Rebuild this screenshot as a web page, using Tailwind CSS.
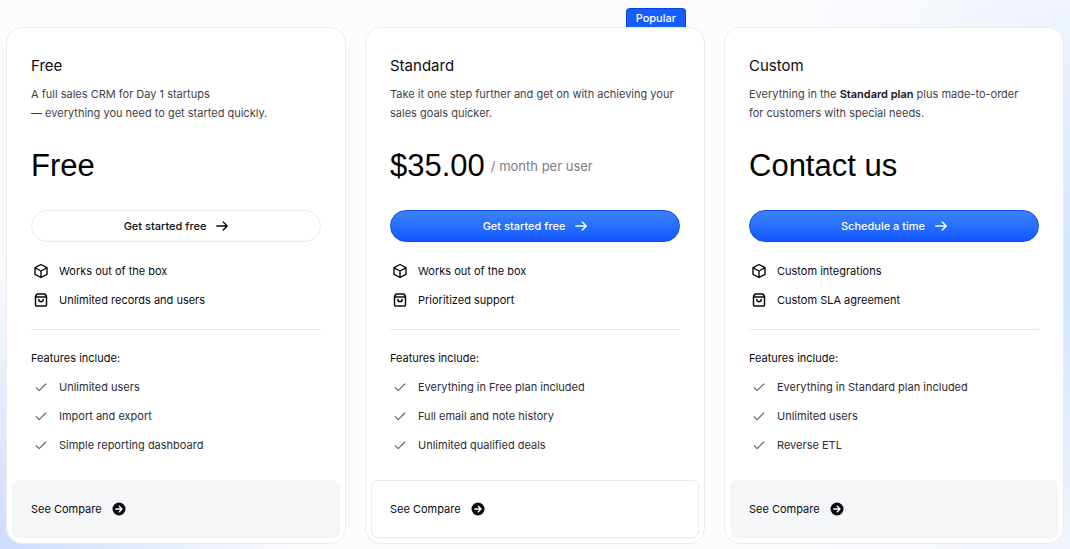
<!DOCTYPE html>
<html lang="en">
<head>
    <meta charset="UTF-8">
    <meta name="viewport" content="width=device-width, initial-scale=1.0">
    <title>Pricing</title>
    <!-- Tailwind CSS CDN -->
    <script src="https://cdn.jsdelivr.net/npm/@tailwindcss/browser@4"></script>
</head>
<body class="min-h-screen bg-[#fcfcfd] bg-[radial-gradient(ellipse_300px_300px_at_0%_100%,#ccdcfd,transparent),radial-gradient(ellipse_260px_300px_at_100%_50%,#cfe6fb,transparent),radial-gradient(ellipse_340px_600px_at_100%_50%,#ecf2fd,transparent)] font-['Inter',sans-serif] text-[11px] text-[#0b0b0f]">
    <!-- Icons shared by the cards -->
    <svg class="hidden" xmlns="http://www.w3.org/2000/svg">
        <symbol id="arrow" viewBox="0 0 12 12" fill="none" stroke="currentColor" stroke-width="1.4" stroke-linecap="round" stroke-linejoin="round">
            <path d="M.8 6h10.4M7.2 2l4 4-4 4"/>
        </symbol>
        <symbol id="box" viewBox="0 0 16 16" fill="none" stroke="currentColor" stroke-width="1.4" stroke-linejoin="round" stroke-linecap="round">
            <path d="M8 1.5l6 3.2v6.6l-6 3.2-6-3.2V4.700zM2.200 4.800L8 8l5.800-3.200M8 8v6.300"/>
        </symbol>
        <symbol id="bag" viewBox="0 0 16 16" fill="none" stroke="currentColor" stroke-width="1.5" stroke-linejoin="round" stroke-linecap="round">
            <path d="M4 2h8l1.500 2.500V13a1 1 0 0 1-1 1h-9a1 1 0 0 1-1-1V4.500zM2.500 4.900h11M5.800 7.500a2.200 2.200 0 0 0 4.400 0"/>
        </symbol>
        <symbol id="check" viewBox="0 0 12 12" fill="none" stroke="currentColor" stroke-width="1.1" stroke-linejoin="round" stroke-linecap="round">
            <path d="M1.200 6.600l3 3L10.800 3"/>
        </symbol>
        <symbol id="go" viewBox="0 0 14 14">
            <circle cx="7" cy="7" r="6.500" fill="currentColor"/>
            <path d="M3.800 7h6M7.300 4.300L10 7 7.300 9.700" fill="none" stroke="#fff" stroke-width="1.400" stroke-linecap="round" stroke-linejoin="round"/>
        </symbol>
    </svg>

    <main class="grid grid-cols-3 gap-[19px] px-1.5 pt-[27px] pb-1">
        <!-- Free -->
        <section class="flex flex-col rounded-2xl border border-[#ececef] bg-white p-[5px]">
            <div class="px-[19px] pt-[19px]">
                <h2 class="text-[15px] leading-7">Free</h2>
                <p class="mt-[5px] pr-1 leading-[19px] text-[#3f3f48]">A full sales CRM for Day 1 startups<br>— everything you need to get started quickly.</p>
                <p class="mt-[23px] font-['Liberation_Sans',sans-serif] text-[31px] leading-10 text-black">Free</p>
                <button class="mt-6 flex h-8 w-full items-center justify-center gap-2.5 rounded-full border border-[#ebebee] bg-white font-medium">
                    Get started free
                    <svg class="size-3"><use href="#arrow"/></svg>
                </button>
                <ul class="mt-[19px] flex flex-col gap-[9px] border-b border-[#e9e9ec] pb-[19px] leading-5">
                    <li class="flex items-center gap-2.5 pl-0.5"><svg class="size-4"><use href="#box"/></svg>Works out of the box</li>
                    <li class="flex items-center gap-2.5 pl-0.5"><svg class="size-4"><use href="#bag"/></svg>Unlimited records and users</li>
                </ul>
                <h3 class="mt-[18px] leading-5">Features include:</h3>
                <ul class="mt-[9px] flex flex-col gap-[9px] leading-5 text-[#2d2d35]">
                    <li class="flex items-center gap-3 pl-1"><svg class="size-3 text-[#606068]"><use href="#check"/></svg>Unlimited users</li>
                    <li class="flex items-center gap-3 pl-1"><svg class="size-3 text-[#606068]"><use href="#check"/></svg>Import and export</li>
                    <li class="flex items-center gap-3 pl-1"><svg class="size-3 text-[#606068]"><use href="#check"/></svg>Simple reporting dashboard</li>
                </ul>
            </div>
            <a href="#compare" class="mt-[25px] flex h-[58px] items-center gap-2.5 rounded-md bg-[#f5f6f8] px-[19px]">
                See Compare
                <svg class="size-3.5"><use href="#go"/></svg>
            </a>
        </section>

        <!-- Standard -->
        <section class="relative flex flex-col rounded-2xl border border-[#ececef] bg-white p-[5px]">
            <span class="absolute -top-5 right-[18px] h-[19px] rounded-t border border-b-0 border-[#0b45e0] bg-[#155dfc] px-[9px] leading-[18px] font-medium text-white">Popular</span>
            <div class="px-[19px] pt-[19px]">
                <h2 class="text-[15px] leading-7">Standard</h2>
                <p class="mt-[5px] pr-1 leading-[19px] text-[#3f3f48]">Take it one step further and get on with achieving your sales goals quicker.</p>
                <div class="mt-[23px] flex items-center gap-1.5 leading-10">
                    <p class="font-['Liberation_Sans',sans-serif] text-[31px] leading-10 text-black">$35.00</p>
                    <span class="text-[13px] text-[#7c7c88]">/ month per user</span>
                </div>
                <button class="mt-6 flex h-8 w-full items-center justify-center gap-2.5 rounded-full border border-[#0b4fe0] bg-linear-to-b from-[#3b82f6] to-[#1457ff] font-medium text-white">
                    Get started free
                    <svg class="size-3"><use href="#arrow"/></svg>
                </button>
                <ul class="mt-[19px] flex flex-col gap-[9px] border-b border-[#e9e9ec] pb-[19px] leading-5">
                    <li class="flex items-center gap-2.5 pl-0.5"><svg class="size-4"><use href="#box"/></svg>Works out of the box</li>
                    <li class="flex items-center gap-2.5 pl-0.5"><svg class="size-4"><use href="#bag"/></svg>Prioritized support</li>
                </ul>
                <h3 class="mt-[18px] leading-5">Features include:</h3>
                <ul class="mt-[9px] flex flex-col gap-[9px] leading-5 text-[#2d2d35]">
                    <li class="flex items-center gap-3 pl-1"><svg class="size-3 text-[#606068]"><use href="#check"/></svg>Everything in Free plan included</li>
                    <li class="flex items-center gap-3 pl-1"><svg class="size-3 text-[#606068]"><use href="#check"/></svg>Full email and note history</li>
                    <li class="flex items-center gap-3 pl-1"><svg class="size-3 text-[#606068]"><use href="#check"/></svg>Unlimited qualified deals</li>
                </ul>
            </div>
            <a href="#compare" class="mt-[25px] flex h-[58px] items-center gap-2.5 rounded-md border border-[#ececef] px-[18px]">
                See Compare
                <svg class="size-3.5"><use href="#go"/></svg>
            </a>
        </section>

        <!-- Custom -->
        <section class="flex flex-col rounded-2xl border border-[#ececef] bg-white p-[5px]">
            <div class="px-[19px] pt-[19px]">
                <h2 class="text-[15px] leading-7">Custom</h2>
                <p class="mt-[5px] pr-1 leading-[19px] text-[#3f3f48]">Everything in the <strong class="font-semibold text-[#14141c]">Standard plan</strong> plus made-to-order for customers with special needs.</p>
                <p class="mt-[23px] font-['Liberation_Sans',sans-serif] text-[31px] leading-10 text-black">Contact us</p>
                <button class="mt-6 flex h-8 w-full items-center justify-center gap-2.5 rounded-full border border-[#0b4fe0] bg-linear-to-b from-[#3b82f6] to-[#1457ff] font-medium text-white">
                    Schedule a time
                    <svg class="size-3"><use href="#arrow"/></svg>
                </button>
                <ul class="mt-[19px] flex flex-col gap-[9px] border-b border-[#e9e9ec] pb-[19px] leading-5">
                    <li class="flex items-center gap-2.5 pl-0.5"><svg class="size-4"><use href="#box"/></svg>Custom integrations</li>
                    <li class="flex items-center gap-2.5 pl-0.5"><svg class="size-4"><use href="#bag"/></svg>Custom SLA agreement</li>
                </ul>
                <h3 class="mt-[18px] leading-5">Features include:</h3>
                <ul class="mt-[9px] flex flex-col gap-[9px] leading-5 text-[#2d2d35]">
                    <li class="flex items-center gap-3 pl-1"><svg class="size-3 text-[#606068]"><use href="#check"/></svg>Everything in Standard plan included</li>
                    <li class="flex items-center gap-3 pl-1"><svg class="size-3 text-[#606068]"><use href="#check"/></svg>Unlimited users</li>
                    <li class="flex items-center gap-3 pl-1"><svg class="size-3 text-[#606068]"><use href="#check"/></svg>Reverse ETL</li>
                </ul>
            </div>
            <a href="#compare" class="mt-[25px] flex h-[58px] items-center gap-2.5 rounded-md bg-[#f5f6f8] px-[19px]">
                See Compare
                <svg class="size-3.5"><use href="#go"/></svg>
            </a>
        </section>
    </main>
</body>
</html>
